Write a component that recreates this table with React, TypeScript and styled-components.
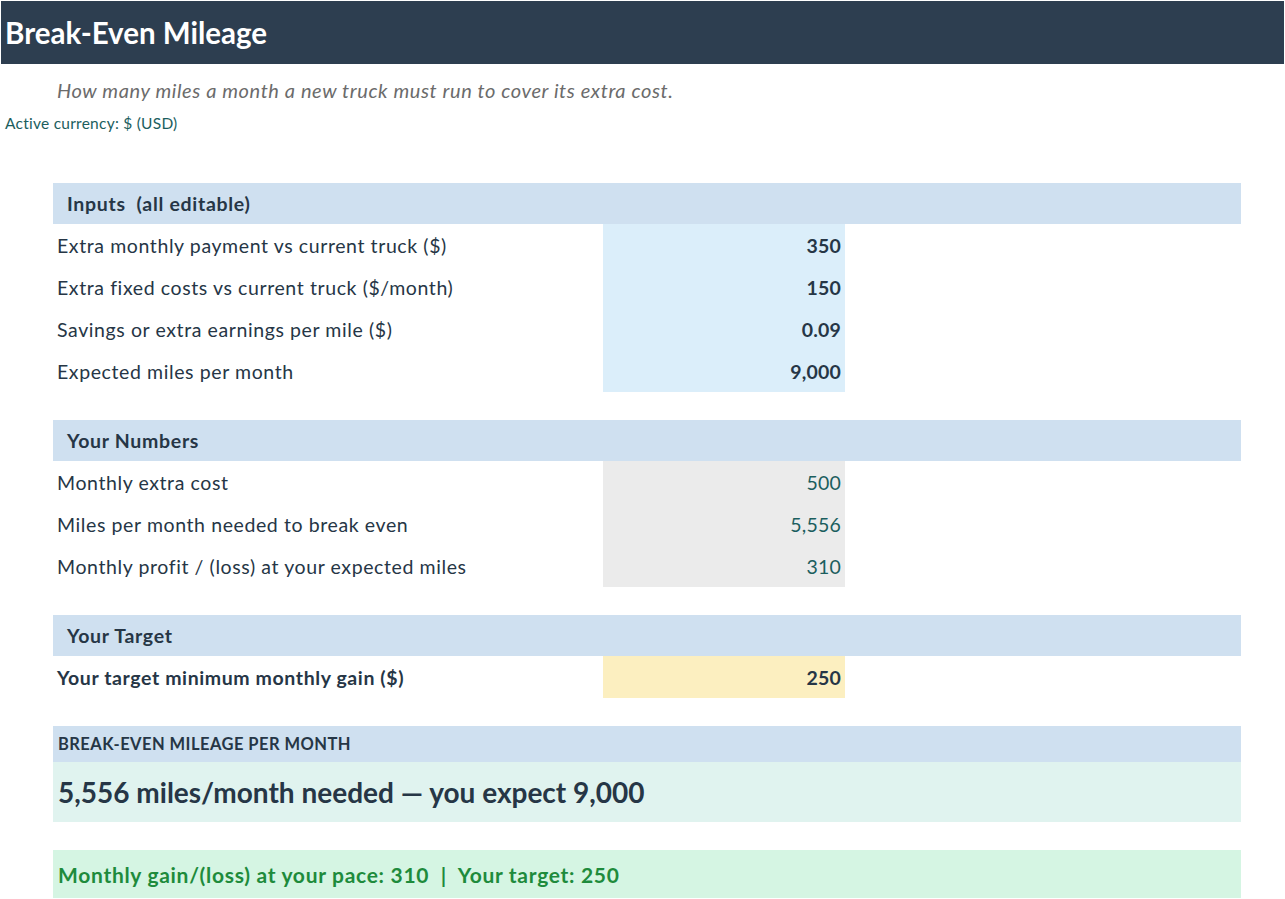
import React from "react";
import styled, { createGlobalStyle } from "styled-components";

const COLORS = {
  NAVY: "#2d3e50",
  INK: "#263646",
  GRAY: "#6b6b6b",
  TEAL: "#1b5e5e",
  HEAD: "#cfe0f0",
  INPUT: "#dbeefa",
  CALC: "#ebebeb",
  TARGET: "#fcefc0",
  RESULT: "#e0f3ef",
  GOOD_BG: "#d5f5e3",
  GOOD: "#1e8b3c",
};

const GlobalStyle = createGlobalStyle`
  html, body {
    margin: 0;
    padding: 0;
    background: #ffffff;
  }
  body {
    font-family: Lato, "Liberation Sans", sans-serif;
    color: ${COLORS.INK};
  }
`;

const Page = styled.div`
  box-sizing: border-box;
  width: 1285px;
  min-height: 899px;
  padding: 1px 1px 0;
`;

const TitleBar = styled.header`
  display: flex;
  align-items: center;
  height: 63px;
  padding: 0 4px;
  background-color: ${COLORS.NAVY};
  h1 {
    margin: 0;
    font-size: 29.5px;
    font-weight: 700;
    color: #ffffff;
  }
`;

const Subtitle = styled.p`
  margin: 13px 0 0 56px;
  font-size: 20px;
  font-style: italic;
  letter-spacing: 0.6px;
  line-height: 26px;
  color: ${COLORS.GRAY};
`;

const Currency = styled.p`
  margin: 10px 0 0 4px;
  font-size: 15.5px;
  letter-spacing: 0.25px;
  line-height: 20px;
  color: ${COLORS.TEAL};
`;

const Sheet = styled.main`
  display: flex;
  flex-direction: column;
  gap: 28px;
  width: 1188px;
  margin: 50px 0 0 52px;
`;

const Section = styled.section`
  display: flex;
  flex-direction: column;
`;

const SectionHeader = styled.div`
  display: flex;
  align-items: center;
  height: 41px;
  padding: 0 14px;
  background-color: ${COLORS.HEAD};
  font-size: 19.5px;
  font-weight: 700;
  letter-spacing: 0.7px;
  white-space: pre;
  color: ${COLORS.INK};
`;

const Row = styled.div`
  display: grid;
  grid-template-columns: 550px 242px;
  height: 42px;
`;

const Label = styled.div<{ $bold?: boolean }>`
  display: flex;
  align-items: center;
  padding-left: 4px;
  font-size: 19.5px;
  letter-spacing: 0.6px;
  font-weight: ${(p) => (p.$bold ? 700 : 400)};
  color: ${COLORS.INK};
`;

type Tone = "input" | "calc" | "target";

const Value = styled.div<{ $tone: Tone }>`
  display: flex;
  align-items: center;
  justify-content: flex-end;
  padding-right: 4px;
  font-size: 19.5px;
  letter-spacing: 0.2px;
  background-color: ${(p) =>
    p.$tone === "input"
      ? COLORS.INPUT
      : p.$tone === "calc"
      ? COLORS.CALC
      : COLORS.TARGET};
  font-weight: ${(p) => (p.$tone === "calc" ? 400 : 700)};
  color: ${(p) => (p.$tone === "calc" ? COLORS.TEAL : COLORS.INK)};
`;

const ResultBlock = styled.section`
  display: flex;
  flex-direction: column;
`;

const ResultHeader = styled.div`
  display: flex;
  align-items: center;
  height: 36px;
  padding: 0 5px;
  background-color: ${COLORS.HEAD};
  font-size: 16.5px;
  font-weight: 700;
  letter-spacing: 0.45px;
  color: ${COLORS.INK};
`;

const ResultBody = styled.div`
  display: flex;
  align-items: center;
  height: 60px;
  padding: 0 5px;
  background-color: ${COLORS.RESULT};
  font-size: 28px;
  font-weight: 700;
  color: ${COLORS.INK};
`;

const Verdict = styled.div`
  display: flex;
  align-items: center;
  height: 48px;
  padding: 0 5px;
  background-color: ${COLORS.GOOD_BG};
  font-size: 21px;
  font-weight: 700;
  letter-spacing: 0.7px;
  white-space: pre;
  color: ${COLORS.GOOD};
`;

interface Line {
  label: string;
  value: string;
}

const inputs: Line[] = [
  { label: "Extra monthly payment vs current truck ($)", value: "350" },
  { label: "Extra fixed costs vs current truck ($/month)", value: "150" },
  { label: "Savings or extra earnings per mile ($)", value: "0.09" },
  { label: "Expected miles per month", value: "9,000" },
];

const numbers: Line[] = [
  { label: "Monthly extra cost", value: "500" },
  { label: "Miles per month needed to break even", value: "5,556" },
  { label: "Monthly profit / (loss) at your expected miles", value: "310" },
];

function Block({
  title,
  lines,
  tone,
  bold,
}: {
  title: string;
  lines: Line[];
  tone: Tone;
  bold?: boolean;
}) {
  return (
    <Section>
      <SectionHeader>{title}</SectionHeader>
      {lines.map((l) => (
        <Row key={l.label}>
          <Label $bold={bold}>{l.label}</Label>
          <Value $tone={tone}>{l.value}</Value>
        </Row>
      ))}
    </Section>
  );
}

export default function App() {
  return (
    <Page>
      <GlobalStyle />
      <TitleBar>
        <h1>Break-Even Mileage</h1>
      </TitleBar>
      <Subtitle>How many miles a month a new truck must run to cover its extra cost.</Subtitle>
      <Currency>Active currency: $ (USD)</Currency>
      <Sheet>
        <Block title="Inputs  (all editable)" lines={inputs} tone="input" />
        <Block title="Your Numbers" lines={numbers} tone="calc" />
        <Block
          title="Your Target"
          lines={[{ label: "Your target minimum monthly gain ($)", value: "250" }]}
          tone="target"
          bold
        />
        <ResultBlock>
          <ResultHeader>BREAK-EVEN MILEAGE PER MONTH</ResultHeader>
          <ResultBody>5,556 miles/month needed — you expect 9,000</ResultBody>
        </ResultBlock>
        <Verdict>{"Monthly gain/(loss) at your pace: 310  |  Your target: 250"}</Verdict>
      </Sheet>
    </Page>
  );
}
